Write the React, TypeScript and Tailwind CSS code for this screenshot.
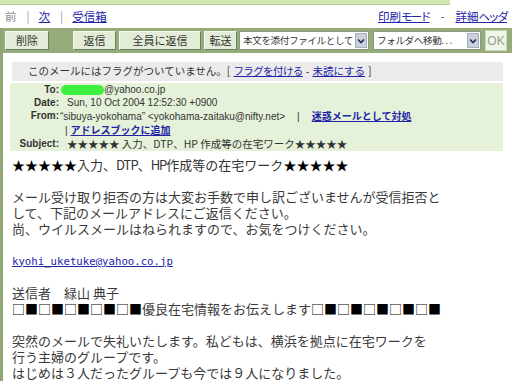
import React from "react";

const jp = { fontFamily: '"Noto Sans CJK JP", sans-serif' };
const hdr = { fontFamily: '"Liberation Sans", "Noto Sans CJK JP", sans-serif' };
const mono = { fontFamily: '"DejaVu Sans Mono", "Noto Sans CJK JP", monospace' };

function Btn({ w, label, ml }: { w: string; label: string; ml: string }) {
  return (
    <div
      className={`${w} ${ml} h-[19px] flex items-center justify-center bg-[#e3ecd6] border border-t-[#f5f9ef] border-l-[#f5f9ef] border-b-[#6f8060] border-r-[#6f8060] text-[11px] text-[#333] leading-none`}
    >
      {label}
    </div>
  );
}

function Sel({ w, label, ml }: { w: string; label: string; ml: string }) {
  return (
    <div
      className={`${w} ${ml} h-[19px] flex items-center justify-between bg-white border border-[#8a9a80] pl-[3px] pr-[1px]`}
    >
      <span className="text-[9.6px] tracking-[-0.4px] text-[#333] leading-none whitespace-nowrap">
        {label}
      </span>
      <span className="shrink-0 w-[12px] h-[15px] bg-[#c9d0dc] border border-[#a6afbf] flex items-center justify-center">
        <svg width="8" height="6" viewBox="0 0 8 6">
          <path d="M1 1.5 L4 4.5 L7 1.5" stroke="#1d2b55" strokeWidth="1.6" fill="none" />
        </svg>
      </span>
    </div>
  );
}

function Line({ children, cls = "" }: { children?: React.ReactNode; cls?: string }) {
  return <div className={`h-[16px] leading-[16px] ${cls}`}>{children}</div>;
}

export default function App() {
  return (
    <div className="w-[512px] h-[383px] overflow-hidden bg-white" style={jp}>
      <div className="h-[5px] w-[450px] bg-[#d0e7b4] border-b border-[#b2cc92]" />
      <div className="h-[23px] flex items-center justify-between pl-[5px] pr-[5px] text-[11.5px] leading-none">
        <div className="flex items-center">
          <span className="text-[#8a8a8a]">前</span>
          <span className="text-[#9a9a9a] ml-[10px]">|</span>
          <span className="text-[#2323a8] underline ml-[9px]">次</span>
          <span className="text-[#9a9a9a] ml-[10px]">|</span>
          <span className="text-[#2323a8] underline ml-[9px]">受信箱</span>
        </div>
        <div className="flex items-center">
          <span className="text-[#2323a8] underline">印刷<span className="tracking-[-2px]">モード</span></span>
          <span className="text-[#555] mx-[11px]">-</span>
          <span className="text-[#2323a8] underline">詳細<span className="tracking-[-2px]">ヘッダ</span></span>
        </div>
      </div>
      <div className="border-l-[3px] border-[#8fa773]">
        <div className="h-[25px] bg-[#95ab79] flex items-center">
          <Btn w="w-[44px]" ml="ml-[2px]" label="削除" />
          <Btn w="w-[43px]" ml="ml-[24px]" label="返信" />
          <Btn w="w-[82px]" ml="ml-[3px]" label="全員に返信" />
          <Btn w="w-[33px]" ml="ml-[3px]" label="転送" />
          <Sel w="w-[130px]" ml="ml-[2px]" label="本文を添付ファイルとして" />
          <Sel w="w-[108px]" ml="ml-[4px]" label="フォルダへ移動. . ." />
          <div className="ml-[4px] w-[22px] h-[21px] bg-[#eef6e6] border border-[#c9d6bb] flex items-center justify-center text-[12px] text-[#999] leading-none" style={hdr}>
            OK
          </div>
        </div>

        <div className="mt-[9px] ml-[9px] mr-[9px] h-[19px] bg-[#ebebeb] flex items-center pl-[16px] text-[10.5px] text-[#333] leading-none whitespace-nowrap">
          このメールにはフラグがついていません。[
          <span className="text-[#2323a8] underline ml-[3px] tracking-[-0.6px]">フラグを付ける</span>
          <span className="mx-[3px]">-</span>
          <span className="text-[#2323a8] underline">未読にする</span>
          <span className="ml-[3px]">]</span>
        </div>

        <div className="mt-[2px] ml-[7px] mr-[9px] bg-[#e5f2d9] pb-[1px] text-[10px] leading-[13px] text-[#333]" style={hdr}>
          <div className="flex">
            <div className="w-[49px] text-right font-bold">To:</div>
            <div className="ml-[2px] flex items-center">
              <span className="inline-block w-[43px] h-[10px] bg-[#3df03d] rounded-[5px]" />
              <span>@yahoo.co.jp</span>
            </div>
          </div>
          <div className="flex">
            <div className="w-[49px] text-right font-bold">Date:</div>
            <div className="ml-[8px]">Sun, 10 Oct 2004 12:52:30 +0900</div>
          </div>
          <div className="flex">
            <div className="w-[49px] text-right font-bold">From:</div>
            <div className="ml-[1px] whitespace-nowrap">
              “sibuya-yokohama” &lt;yokohama-zaitaku@nifty.net&gt;
              <span className="mx-[12px]">|</span>
              <span className="text-[#2323a8] underline font-bold" style={jp}>迷惑メールとして対処</span>
            </div>
          </div>
          <div className="flex">
            <div className="w-[49px]" />
            <div className="ml-[6px] whitespace-nowrap">
              |<span className="ml-[3px] text-[#2323a8] underline font-bold" style={jp}>アドレスブックに追加</span>
            </div>
          </div>
          <div className="flex">
            <div className="w-[49px] text-right font-bold">Subject:</div>
            <div className="ml-[8px] whitespace-nowrap text-[10.5px]" style={jp}>
              ★★★★★ 入力、DTP、HP 作成等の在宅ワーク★★★★★
            </div>
          </div>
        </div>

        <div className="mt-[6px] pl-[9px] text-[13px] text-[#3a3a3a] whitespace-nowrap">
          <Line cls="text-black">
            ★★★★★<span className="text-[#333]">入力、<span className="tracking-[-1px]">DTP</span>、<span className="tracking-[-1px]">HP</span>作成等の在宅ワーク</span>★★★★★
          </Line>
          <Line />
          <Line>メール受け取り拒否の方は大変お手数で申し訳ございませんが受信拒否と</Line>
          <Line>して、下記のメールアドレスにご返信ください。</Line>
          <Line>尚、ウイルスメールはねられますので、お気をつけください。</Line>
          <Line />
          <div className="h-[16px] flex items-center pt-[2px]">
            <span className="text-[#2323a8] underline text-[10.7px] leading-none" style={mono}>kyohi_uketuke@yahoo.co.jp</span>
          </div>
          <Line />
          <Line>送信者　緑山 典子</Line>
          <Line>
            <span className="text-black">□■□■□■□■□■</span>優良在宅情報をお伝えします<span className="text-black">□■□■□■□■□■</span>
          </Line>
          <Line />
          <Line>突然のメールで失礼いたします。私どもは、横浜を拠点に在宅ワークを</Line>
          <Line>行う主婦のグループです。</Line>
          <Line>はじめは３人だったグループも今では９人になりました。</Line>
        </div>
      </div>
    </div>
  );
}
